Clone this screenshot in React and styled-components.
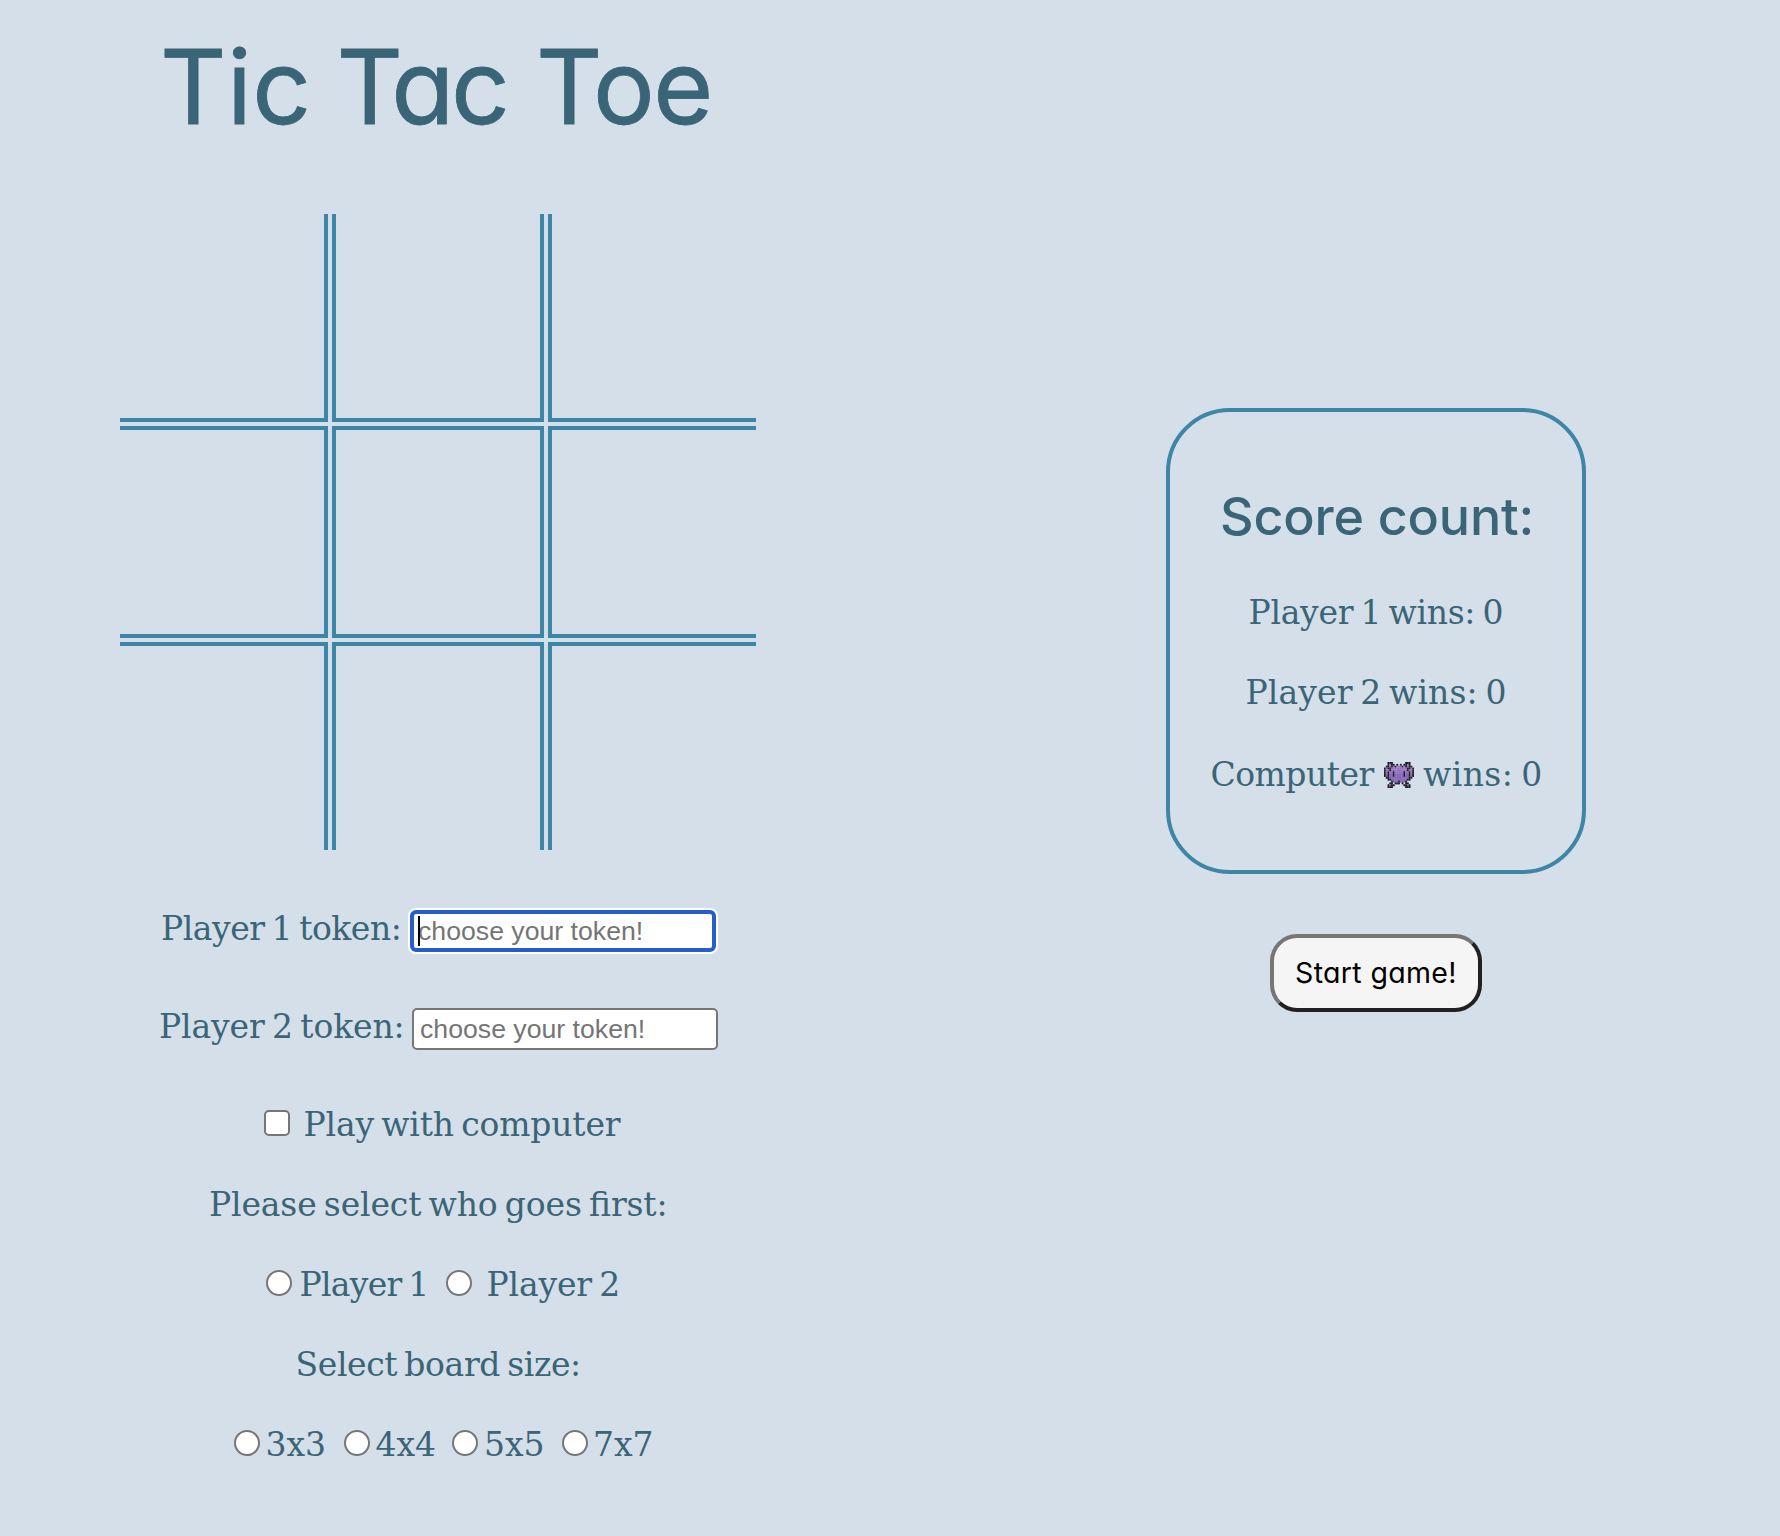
import React from 'react';
import styled, { createGlobalStyle } from 'styled-components';

const ink = '#3a6577';
const line = '#3d86a6';
const paper = '#d5dfe9';
const serif = '"DejaVu Serif", serif';
const rounded = 'Inter, "Liberation Sans", sans-serif';

const GlobalStyle = createGlobalStyle`
  * { box-sizing: border-box; }
  html, body { margin: 0; background: ${paper}; }
  body { overflow: hidden; }
`;

const Page = styled.main`
  display: flex;
  width: 1780px;
  height: 1536px;
  background: ${paper};
  color: ${ink};
`;

const GameColumn = styled.section`
  display: flex;
  flex-direction: column;
  width: 876px;
  padding-top: 27px;
`;

const Title = styled.h1`
  display: flex;
  margin: 0 0 67px;
  padding-left: 160px;
  height: 120px;
  font: 400 103px/120px ${rounded};
  font-feature-settings: "cv11";
  -webkit-text-stroke: 0.8px ${ink};
  white-space: nowrap;
`;

const Word = styled.span`
  flex: none;
  width: ${(p) => p.$width}px;
  letter-spacing: ${(p) => p.$spacing}px;
`;

const Board = styled.div`
  display: grid;
  grid-template-columns: 208px 212px 208px;
  grid-template-rows: 208px 212px 208px;
  gap: 4px;
  margin: 0 auto 59px 120px;
`;

const Cell = styled.div`
  border: 0 solid ${line};
  border-top-width: ${(p) => (p.$row > 0 ? 4 : 0)}px;
  border-bottom-width: ${(p) => (p.$row < 2 ? 4 : 0)}px;
  border-left-width: ${(p) => (p.$col > 0 ? 4 : 0)}px;
  border-right-width: ${(p) => (p.$col < 2 ? 4 : 0)}px;
`;

const Row = styled.div`
  display: flex;
  align-items: flex-start;
  height: 40px;
  padding-left: ${(p) => p.$indent}px;
  margin-bottom: ${(p) => p.$after || 40}px;
`;

const Text = styled.span`
  flex: none;
  width: ${(p) => (p.$width ? `${p.$width}px` : 'auto')};
  font: 400 33px/40px ${serif};
  font-feature-settings: "liga" 1;
  letter-spacing: ${(p) => (p.$spacing || 0) - 0.27}px;
  word-spacing: -3px;
  white-space: nowrap;
`;

const Field = styled.div`
  position: relative;
  flex: none;
  margin-top: 1px;
  width: 306px;
  height: 42px;
  padding-left: ${(p) => (p.$focused ? 4 : 6)}px;
  border: ${(p) => (p.$focused ? '4px solid #265ec9' : '2px solid #767676')};
  border-radius: ${(p) => (p.$focused ? 6 : 5)}px;
  box-shadow: ${(p) => (p.$focused ? '0 0 0 2px #fff' : 'none')};
  background: #fff;
  color: #757575;
  font: 26.67px/${(p) => (p.$focused ? 34 : 38)}px "Liberation Sans", Arial, sans-serif;
  white-space: nowrap;
`;

const Caret = styled.i`
  position: absolute;
  left: 4px;
  top: 2px;
  width: 2px;
  height: 30px;
  background: #000;
`;

const Tick = styled.span`
  flex: none;
  width: 26px;
  height: 26px;
  margin-top: 5px;
  margin-right: ${(p) => p.$gap}px;
  border: 2px solid #767676;
  border-radius: ${(p) => (p.$round ? '50%' : '5px')};
  background: #fff;
`;

const ScoreColumn = styled.section`
  width: 420px;
  margin: 408px 0 0 290px;
`;

const ScoreCard = styled.div`
  height: 466px;
  padding-top: 75px;
  border: 4px solid ${line};
  border-radius: 64px;
`;

const ScoreTitle = styled.h2`
  margin: 0 0 46px;
  padding-left: 50px;
  font: 500 52px/60px ${rounded};
  letter-spacing: -0.15px;
  white-space: nowrap;
`;

const Invader = styled.svg`
  flex: none;
  width: 30px;
  height: 26px;
  margin-top: 7px;
  margin-right: 9px;
`;

const StartButton = styled.button`
  display: block;
  width: 212px;
  height: 78px;
  margin: 60px 0 0 104px;
  padding: 0 0 1px 21px;
  border: 4px solid;
  border-color: #767676 #212121 #212121 #767676;
  border-radius: 27px;
  background: #f5f5f5;
  color: #000;
  font: 400 28.5px/36px ${rounded};
  font-feature-settings: "cv11";
  letter-spacing: 0.35px;
  text-align: left;
  white-space: nowrap;
`;

const invaderPixels = [
  '..###.......###..',
  '..#P##.#.#.##P#..',
  '.##P#P#PPP#P#P##.',
  '#P##PPPPPPPPP##P#',
  '#PP#PPPPPPPPP#PP#',
  '#P#PP#PPPPP#PP#P#',
  '#P#PP#PPPPP#PP#P#',
  '#P#PP#PPPPP#PP#P#',
  '.##PPPPPPPPPPP##.',
  '..##PPPPPPPPP##..',
  '....#PPP#PPP#....',
  '...##.###.###....'.replace('##....', '.##...'),
  '..#P##.....##P#..',
  '..###.......###..',
];

const purples = ['#9a78c6', '#946fc2', '#8e69be', '#8963ba', '#835db5', '#7d57b0', '#7751aa'];

function InvaderIcon() {
  return (
    <Invader viewBox="0 0 17 14" preserveAspectRatio="none" role="img" aria-label="👾">
      {invaderPixels.flatMap((row, y) =>
        [...row].map((c, x) =>
          c === '.' ? null : (
            <rect
              key={`${x}-${y}`}
              x={x}
              y={y}
              width="1.04"
              height="1.04"
              fill={c === '#' ? '#1c1a20' : purples[Math.floor(y / 2)]}
            />
          )
        )
      )}
    </Invader>
  );
}

const sizes = [
  { label: '3x3', gap: 5.5, width: 78.5 },
  { label: '4x4', gap: 5.5, width: 76.5 },
  { label: '5x5', gap: 6, width: 78 },
  { label: '7x7', gap: 5, width: 70 },
];

export default function App() {
  return (
    <Page>
      <GlobalStyle />
      <GameColumn>
        <Title>
          <Word $width={176.4} $spacing={0.4}>Tic</Word>
          <Word $width={199.7} $spacing={-3.5}>Tac</Word>
          <Word $width={180} $spacing={-1.5}>Toe</Word>
        </Title>
        <Board>
          {Array.from({ length: 9 }, (_, i) => (
            <Cell key={i} $row={Math.floor(i / 3)} $col={i % 3} />
          ))}
        </Board>
        <Row $indent={161} $after={58}>
          <Text $width={249} $spacing={-0.2}>Player 1 token:</Text>
          <Field $focused>choose your token!<Caret /></Field>
        </Row>
        <Row $indent={159} $after={58}>
          <Text $width={253} $spacing={0.15}>Player 2 token:</Text>
          <Field>choose your token!</Field>
        </Row>
        <Row $indent={264}>
          <Tick $gap={13.5} />
          <Text $spacing={0.1}>Play with computer</Text>
        </Row>
        <Row $indent={209}>
          <Text $spacing={0.12}>Please select who goes first:</Text>
        </Row>
        <Row $indent={266}>
          <Tick $round $gap={7.5} />
          <Text $width={146.5} $spacing={-0.45}>Player 1</Text>
          <Tick $round $gap={14.5} />
          <Text $spacing={0.1}>Player 2</Text>
        </Row>
        <Row $indent={295.5}>
          <Text $spacing={-0.1}>Select board size:</Text>
        </Row>
        <Row $indent={234}>
          {sizes.map((s) => (
            <React.Fragment key={s.label}>
              <Tick $round $gap={s.gap} />
              <Text $width={s.width} $spacing={0.27}>{s.label}</Text>
            </React.Fragment>
          ))}
        </Row>
      </GameColumn>
      <ScoreColumn>
        <ScoreCard>
          <ScoreTitle>Score count:</ScoreTitle>
          <Row $indent={78.5}>
            <Text $spacing={0}>Player 1 wins: 0</Text>
          </Row>
          <Row $indent={75.5} $after={42}>
            <Text $spacing={0.4}>Player 2 wins: 0</Text>
          </Row>
          <Row $indent={40.5}>
            <Text $width={173.5} $spacing={-0.25}>Computer</Text>
            <InvaderIcon />
            <Text $spacing={0.7}>wins: 0</Text>
          </Row>
        </ScoreCard>
        <StartButton type="button">Start game!</StartButton>
      </ScoreColumn>
    </Page>
  );
}
